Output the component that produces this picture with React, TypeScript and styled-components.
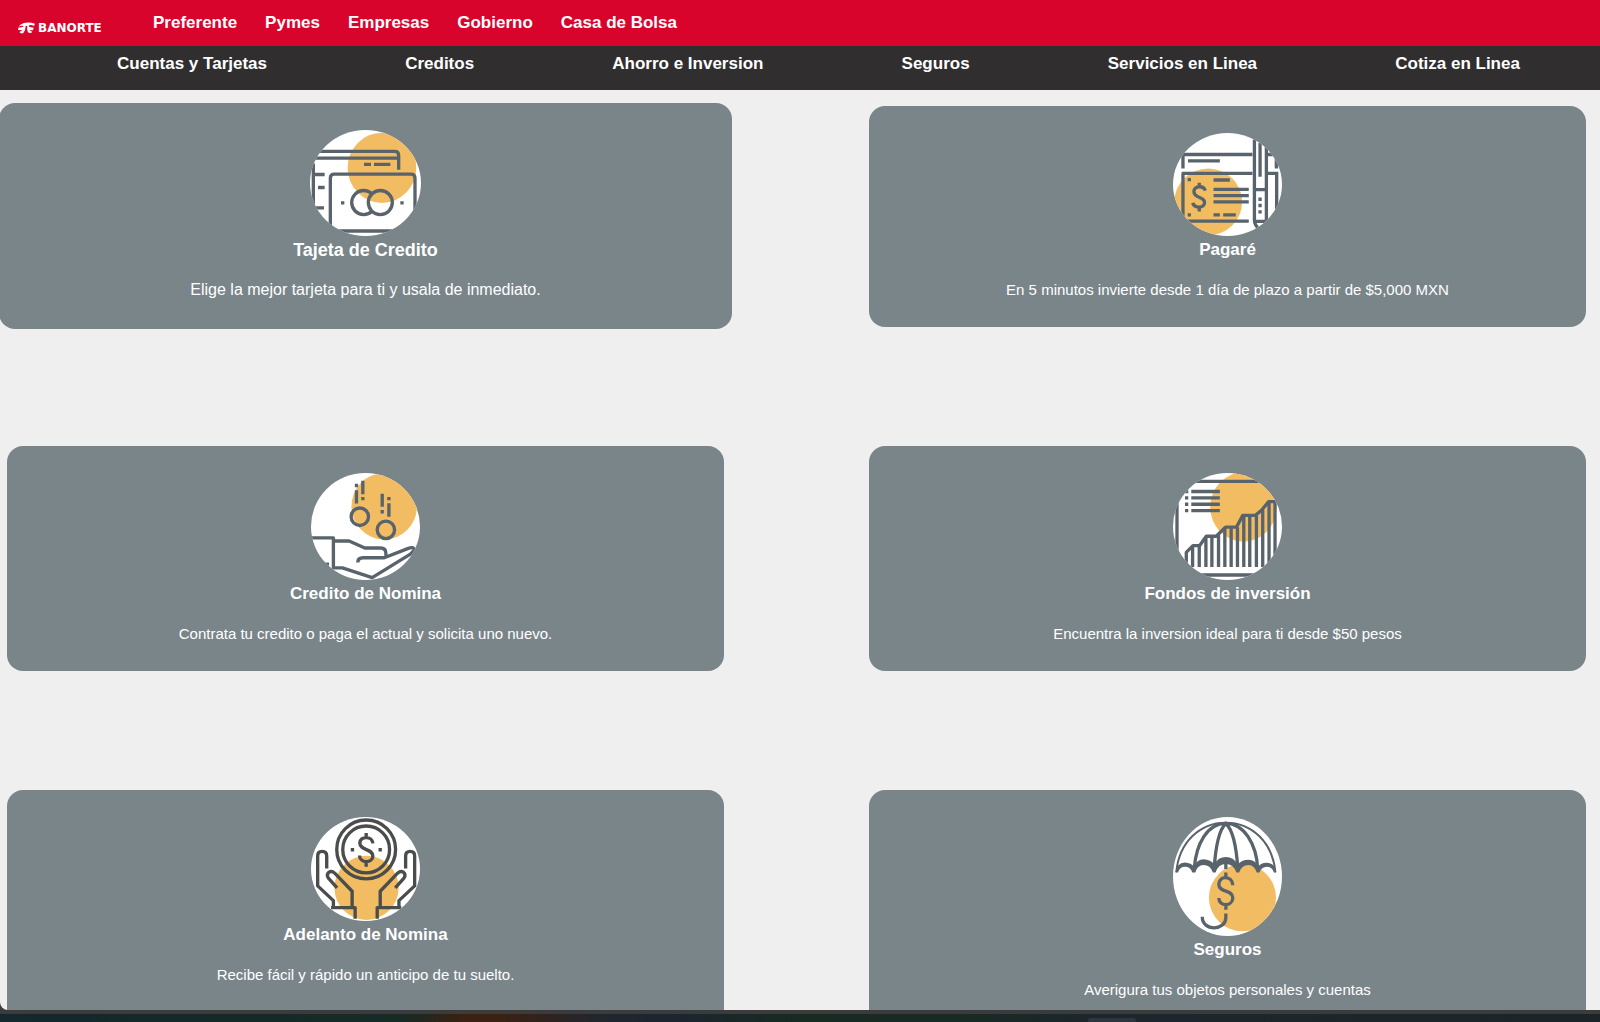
import React from "react";
import styled, { createGlobalStyle } from "styled-components";

const Global = createGlobalStyle`
  *, *::before, *::after { box-sizing: border-box; }
  body {
    margin: 0;
    background: #3b3b3b;
    font-family: Arial, "Liberation Sans", sans-serif;
  }
`;

const Shell = styled.div`
  display: flex;
  flex-direction: column;
  height: 100vh;
  overflow: hidden;
`;

const Page = styled.div`
  flex: 1;
  min-height: 0;
  overflow: hidden;
  background: #efefef;
  border-bottom-left-radius: 8px;
`;

const TopBar = styled.header`
  display: flex;
  align-items: center;
  height: 46px;
  padding-left: 18px;
  background: #d9042b;
`;

const Brand = styled.a`
  display: flex;
  align-items: center;
  gap: 3px;
  width: 135px;
  padding-top: 10px;
  color: #fff;
  font-family: "DejaVu Sans", sans-serif;
  font-size: 12px;
  font-weight: 700;
  line-height: 12px;
  text-decoration: none;
`;

const SegmentNav = styled.nav`
  display: flex;
  gap: 28px;
`;

const ProductNav = styled.nav`
  display: flex;
  justify-content: space-around;
  height: 44px;
  padding: 8px 11px 0 48px;
  background: #302e2f;
`;

const NavLink = styled.a`
  color: #fff;
  font-size: 17px;
  font-weight: 700;
  line-height: 20px;
  text-decoration: none;
  white-space: nowrap;
`;

const CardGrid = styled.main`
  display: grid;
  grid-template-columns: 1fr 1fr;
  gap: 119px 145px;
  padding: 16px 14px 0 7px;
`;

const CardBox = styled.article<{ $raised?: boolean }>`
  display: flex;
  flex-direction: column;
  align-items: center;
  margin: ${(p) => (p.$raised ? "-3px -8px -2px" : "0")};
  padding: 27px 20px;
  border-radius: 16px;
  background: #7a858a;
  color: #fff;
  text-align: center;
`;

const Picture = styled.svg<{ $w: number; $h: number }>`
  display: block;
  width: ${(p) => p.$w}px;
  height: ${(p) => p.$h}px;
  border-radius: 50%;
  background: #fff;
  fill: none;
  stroke: #59636b;
  stroke-width: 10;
`;

const CardTitle = styled.h2<{ $raised?: boolean }>`
  margin: 0 0 16px;
  font-size: ${(p) => (p.$raised ? 18 : 17)}px;
  font-weight: 700;
  line-height: 28px;
`;

const CardText = styled.p<{ $raised?: boolean }>`
  margin: 0;
  font-size: ${(p) => (p.$raised ? 16 : 15)}px;
  line-height: 20px;
`;

const Taskbar = styled.footer`
  display: flex;
  height: 12px;
  flex: none;
  border-top: 4px solid #3b3b3b;
  padding: 4px 0 0 68%;
  background: linear-gradient(90deg, #14282d 0%, #162a26 25%, #3a2113 29%, #3a2113 31%, #202630 38%, #1c2530 42%, #182a22 50%, #182a24 60%, #1c262c 68%, #1b2529 100%);
`;

const TaskbarTab = styled.div`
  width: 48px;
  height: 4px;
  border-radius: 3px 3px 0 0;
  background: #2c363d;
`;

const ORANGE = "#f2bd62";

function Spot({ cx, cy, rx, ry }: { cx: number; cy: number; rx: number; ry: number }) {
  return <ellipse cx={cx} cy={cy} rx={rx} ry={ry} fill={ORANGE} stroke="none" />;
}

type ArtProps = { w: number; h: number; box: string; children: React.ReactNode };
function Art({ w, h, box, children }: ArtProps) {
  return (
    <Picture $w={w} $h={h} viewBox={box} preserveAspectRatio="none" aria-hidden="true">
      {children}
    </Picture>
  );
}

const CreditCardArt = (
  <Art w={111} h={106} box="30 30 333 317">
    <Spot cx={246} cy={143} rx={103} ry={105} />
    <path d="M50 94H284Q296 94 296 106V149M44 114H293M40 130V270M40 163H74M54 202H74M40 263H72" />
    <path d="M192 133H213M222 133H271" />
    <path d="M91 340V174Q91 162 103 162H333Q345 162 345 174V340M91 332H345" />
    <path d="M216 221A36 36 0 1 0 216 273" />
    <circle cx="241" cy="247" r="36" />
    <path d="M123 248H133M301 248H311" />
  </Art>
);

const NoteArt = (
  <Art w={109} h={103} box="39 36 328 311">
    <Spot cx={145} cy={244} rx={102} ry={101} />
    <path d="M69 143V101H278M324 101H350V143M84 120H180M65 158H278M324 158H351V300M69 158V302H267" />
    <path d="M161 178H210M161 206H267M161 225H267M161 244H267M161 283H180M190 283H228" />
    <path d="M83 177H93M83 283H93" />
    <path d="M136 210C132 194 102 194 102 213C102 235 134 227 134 246C134 264 104 264 98 247M118 186V201M118 260V273" />
    <path d="M284 56V300Q285 313 294 322M320 66V302M301 66V168M281 207H320M324 303H345M281 303H320" />
    <path d="M301 231V280" strokeDasharray="10 9" />
  </Art>
);

const PayrollArt = (
  <Art w={109} h={107} box="34 39 326 318">
    <Spot cx={253} cy={138} rx={98} ry={99} />
    <circle cx="180" cy="169" r="26" />
    <circle cx="258" cy="208" r="26" />
    <path d="M170 71V81M170 90V130M189 62V102M189 110V120M247 101V139M247 149V159M267 110V120M267 129V169" />
    <path d="M34 232H101V326M101 241H148L195 262H242Q258 262 258 278V285M174 305Q174 291 190 291H253L325 263Q341 257 343 266Q342 271 330 281L217 350L128 321H101M77 310H88" strokeLinejoin="round" />
  </Art>
);

const FundsArt = (
  <Art w={109} h={107} box="39 39 328 318">
    <Spot cx={251} cy={140} rx={100} ry={103} />
    <path d="M90 64H310M51 120V290M120 342H290" />
    <path d="M75 94H85M94 94H180M75 113H85M94 113H180M75 132H85M94 132H180M75 151H85M94 151H180" />
    <path d="M79 318V275L99 255H119L139 227H169L197 200H230L249 165H287L306 149L327 124H346V318" strokeLinejoin="round" />
    <path d="M98 257V318M118 257V318M138 229V318M156 229V318M176 222V318M195 203V318M214 203V318M233 200V318M252 166V318M270 166V318M290 165V318M309 149V318M328 126V318" />
  </Art>
);

const AdvanceArt = (
  <Art w={109} h={104} box="34 36 326 311">
    <Spot cx={200} cy={248} rx={96} ry={96} />
    <g stroke="#4b4d4d">
      <circle cx="199" cy="133" r="88" />
      <circle cx="199" cy="133" r="70" />
      <path d="M219 115C218 92 180 92 180 114C180 137 219 130 219 153C219 175 180 175 179 151M199 84V98M199 169V185" />
      <path d="M153 134H163M236 134H246" />
      <g strokeLinejoin="round">
        <path d="M81 190V153Q81 139 67 139Q54 139 54 153V242L101 286V307M112 248L86 219Q79 208 88 201Q96 196 105 204L157 258V306M94 307H166V340" />
        <path d="M317 190V153Q317 139 331 139Q344 139 344 153V242L297 286V307M286 248L312 219Q319 208 310 201Q302 196 293 204L241 258V306M304 307H232V340" />
      </g>
    </g>
  </Art>
);

const InsuranceArt = (
  <Art w={109} h={119} box="39 36 328 354">
    <Spot cx={248} cy={276} rx={101} ry={100} />
    <path d="M49 200C57 112 119 53 198 53C277 53 339 112 347 200" strokeWidth="6" />
    <path d="M103 190C108 115 143 55 198 55C252 55 290 115 294 190M163 190C167 125 176 75 198 55C220 75 230 125 234 190" />
    <path
      d="M46 201Q50 172 75 171Q94 172 102 183Q112 162 131 162Q153 163 163 177Q175 155 198 155Q221 155 234 177Q245 163 266 163Q287 164 296 183Q305 171 322 172Q346 174 350 201H343Q337 184 322 184Q305 185 299 201H291Q284 180 266 179Q245 180 238 201H230Q220 176 198 176Q176 176 167 201H159Q151 179 131 179Q112 180 106 201H97Q92 184 75 184Q59 184 54 201Z"
      fill="#59636b"
      stroke="none"
    />
    <path d="M198 170V191M198 201V216M219 239C217 209 177 209 177 237C177 262 219 251 219 276C219 303 177 304 177 277M198 297V312M198 323V336C198 374 127 378 127 333" />
  </Art>
);

const segments = ["Preferente", "Pymes", "Empresas", "Gobierno", "Casa de Bolsa"];
const products = [
  "Cuentas y Tarjetas",
  "Creditos",
  "Ahorro e Inversion",
  "Seguros",
  "Servicios en Linea",
  "Cotiza en Linea",
];

const cards = [
  { title: "Tajeta de Credito", text: "Elige la mejor tarjeta para ti y usala de inmediato.", art: CreditCardArt, raised: true },
  { title: "Pagaré", text: "En 5 minutos invierte desde 1 día de plazo a partir de $5,000 MXN", art: NoteArt },
  { title: "Credito de Nomina", text: "Contrata tu credito o paga el actual y solicita uno nuevo.", art: PayrollArt },
  { title: "Fondos de inversión", text: "Encuentra la inversion ideal para ti desde $50 pesos", art: FundsArt },
  { title: "Adelanto de Nomina", text: "Recibe fácil y rápido un anticipo de tu suelto.", art: AdvanceArt },
  { title: "Seguros", text: "Averigura tus objetos personales y cuentas", art: InsuranceArt },
];

export default function App() {
  return (
    <Shell>
      <Global />
      <Page>
        <TopBar>
          <Brand href="#">
            <svg width="17" height="12" viewBox="0 0 51 36" fill="#fff" aria-hidden="true">
              <path d="M7 8Q24-3 51 5L48 12Q40 8 34 10Q31 13 35 15L47 17L45 25L34 24L43 30Q37 36 30 31Q26 22 28 11L23 12Q23 26 16 33Q9 37 4 30L14 25L0 24L2 16Q14 17 18 12Q10 9 2 14Z" />
            </svg>
            BANORTE
          </Brand>
          <SegmentNav aria-label="Segmentos">
            {segments.map((s) => (
              <NavLink key={s} href="#">{s}</NavLink>
            ))}
          </SegmentNav>
        </TopBar>
        <ProductNav aria-label="Productos">
          {products.map((s) => (
            <NavLink key={s} href="#">{s}</NavLink>
          ))}
        </ProductNav>
        <CardGrid>
          {cards.map((c) => (
            <CardBox key={c.title} $raised={c.raised}>
              {c.art}
              <CardTitle $raised={c.raised}>{c.title}</CardTitle>
              <CardText $raised={c.raised}>{c.text}</CardText>
            </CardBox>
          ))}
        </CardGrid>
      </Page>
      <Taskbar>
        <TaskbarTab />
      </Taskbar>
    </Shell>
  );
}
